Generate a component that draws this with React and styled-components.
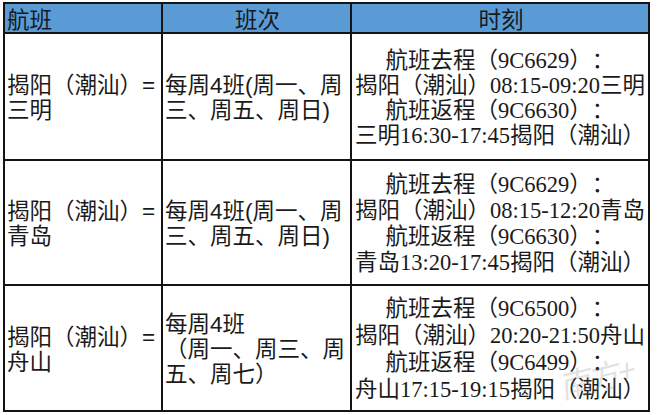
import React from "react";
import styled, { createGlobalStyle } from "styled-components";

const Global = createGlobalStyle`
  html, body { margin: 0; padding: 0; background: #ffffff; }
  body { font-family: "Noto Sans CJK SC", sans-serif; }
`;

const Page = styled.div`
  width: 660px;
  height: 415px;
  padding: 2px 0 0 3px;
  box-sizing: border-box;
  background: #ffffff;
`;

const Sheet = styled.div`
  display: grid;
  grid-template-columns: 156px 187px 296px;
  grid-template-rows: 28px 125px 123px 124px;
  gap: 2px;
  padding: 2px;
  width: max-content;
  background: #141414;
`;

const HeadCell = styled.div`
  background: #5b9bd5;
  color: #161a22;
  font-family: "Noto Sans CJK SC", sans-serif;
  font-size: 22.5px;
  line-height: 1;
  display: flex;
  align-items: center;
  justify-content: ${(p) => (p.$align === "center" ? "center" : "flex-start")};
  padding: 1px 0 0 2px;
  box-sizing: border-box;
  white-space: nowrap;
`;

const Cell = styled.div`
  position: relative;
  background: #ffffff;
  color: #1a1a1a;
  font-family: ${(p) =>
    p.$serif
      ? `"Liberation Serif", "Noto Sans CJK SC", serif`
      : `"Liberation Sans", "Noto Sans CJK SC", sans-serif`};
  font-size: 22.5px;
  line-height: ${(p) => p.$pitch || 25}px;
  text-spacing-trim: space-all;
  display: flex;
  flex-direction: column;
  justify-content: center;
  align-items: ${(p) => (p.$center ? "center" : "flex-start")};
  padding: ${(p) => (p.$center ? "2px 0 0 0" : "3px 0 0 2px")};
  box-sizing: border-box;
`;

const Line = styled.div`
  white-space: nowrap;
`;

const Watermark = styled.span`
  position: absolute;
  right: 14px;
  bottom: 18px;
  font-family: "Noto Sans CJK SC", sans-serif;
  font-size: 32px;
  line-height: 1;
  color: rgba(140, 140, 140, 0.25);
  transform: rotate(-14deg) skewX(-12deg);
  pointer-events: none;
  letter-spacing: -3px;
`;

const rows = [
  {
    route: ["揭阳（潮汕）=", "三明"],
    days: ["每周4班(周一、周", "三、周五、周日)"],
    times: [
      "航班去程（9C6629）：",
      "揭阳（潮汕）08:15-09:20三明",
      "航班返程（9C6630）：",
      "三明16:30-17:45揭阳（潮汕）",
    ],
    pitch: 25,
  },
  {
    route: ["揭阳（潮汕）=", "青岛"],
    days: ["每周4班(周一、周", "三、周五、周日)"],
    times: [
      "航班去程（9C6629）：",
      "揭阳（潮汕）08:15-12:20青岛",
      "航班返程（9C6630）：",
      "青岛13:20-17:45揭阳（潮汕）",
    ],
    pitch: 26,
  },
  {
    route: ["揭阳（潮汕）=", "舟山"],
    days: ["每周4班", "（周一、周三、周", "五、周七）"],
    times: [
      "航班去程（9C6500）：",
      "揭阳（潮汕）20:20-21:50舟山",
      "航班返程（9C6499）：",
      "舟山17:15-19:15揭阳（潮汕）",
    ],
    pitch: 27,
    mark: true,
  },
];

export default function App() {
  return (
    <>
      <Global />
      <Page>
        <Sheet>
          <HeadCell>航班</HeadCell>
          <HeadCell $align="center">班次</HeadCell>
          <HeadCell $align="center">时刻</HeadCell>
          {rows.map((r, i) => (
            <React.Fragment key={i}>
              <Cell>
                {r.route.map((t, j) => (
                  <Line key={j}>{t}</Line>
                ))}
              </Cell>
              <Cell>
                {r.days.map((t, j) => (
                  <Line key={j}>{t}</Line>
                ))}
              </Cell>
              <Cell $serif $center $pitch={r.pitch}>
                {r.times.map((t, j) => (
                  <Line key={j}>{t}</Line>
                ))}
                {r.mark && <Watermark>南方+</Watermark>}
              </Cell>
            </React.Fragment>
          ))}
        </Sheet>
      </Page>
    </>
  );
}
